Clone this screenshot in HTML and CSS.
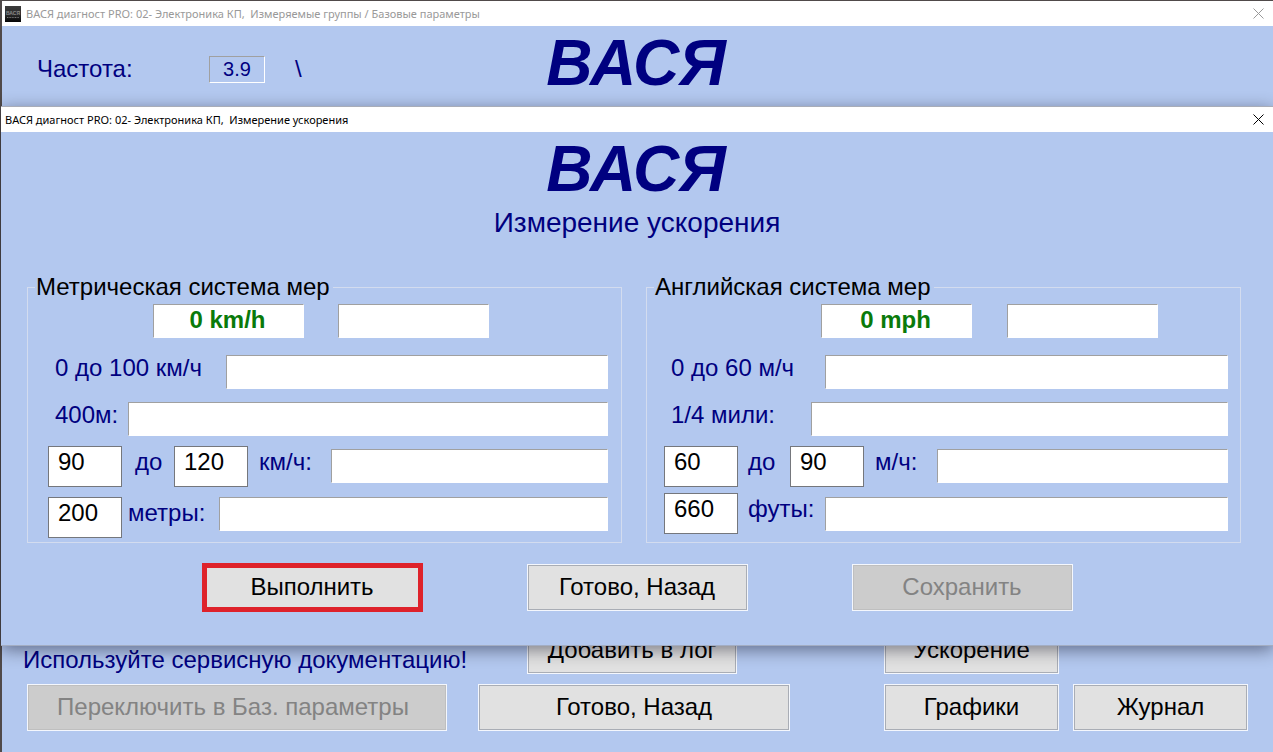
FILE: index.html
```html
<!DOCTYPE html>
<html lang="ru">
<head>
<meta charset="utf-8">
<title>ВАСЯ диагност PRO</title>
<link rel="stylesheet" href="styles.css">
</head>
<body>
<main class="window">
  <header class="titlebar titlebar-inactive">
    <svg class="app-icon" viewBox="0 0 16 16" aria-hidden="true">
      <defs><linearGradient id="g" x1="0" y1="0" x2="0" y2="1"><stop offset="0" stop-color="#3c3c3c"/><stop offset="0.55" stop-color="#2a2a2a"/><stop offset="1" stop-color="#050505"/></linearGradient></defs>
      <rect width="16" height="16" fill="url(#g)"/>
      <text class="app-icon-text" x="8" y="9" text-anchor="middle">ВАСЯ</text>
      <path d="M2 11.500h12" stroke="#777" stroke-width="1" stroke-dasharray="1 .6"/>
    </svg>
    <span class="titlebar-text">ВАСЯ диагност PRO: 02- Электроника КП,  Измеряемые группы / Базовые параметры</span>
    <button class="close" aria-label="Закрыть окно"><svg viewBox="0 0 11 11"><path d="M.5.5l10 10M10.500.5l-10 10"/></svg></button>
  </header>

  <section class="rate-bar">
    <div class="rate">
      <label class="rate-label" for="rate">Частота:</label>
      <input class="rate-value" id="rate" value="3.9" readonly>
      <span>\</span>
    </div>
    <div class="logo">ВАСЯ</div>
  </section>

  <footer class="window-actions">
    <p class="hint">Используйте сервисную документацию!</p>
    <button class="btn btn-log">Добавить в лог</button>
    <button class="btn btn-accel">Ускорение</button>
    <button class="btn btn-basic" disabled>Переключить в Баз. параметры</button>
    <button class="btn btn-back">Готово, Назад</button>
    <button class="btn btn-graph">Графики</button>
    <button class="btn btn-journal">Журнал</button>
  </footer>

  <section class="dialog" role="dialog" aria-labelledby="dialog-title">
    <header class="titlebar">
      <span class="titlebar-text" id="dialog-title">ВАСЯ диагност PRO: 02- Электроника КП,  Измерение ускорения</span>
      <button class="close" aria-label="Закрыть"><svg viewBox="0 0 11 11"><path d="M.5.5l10 10M10.500.5l-10 10"/></svg></button>
    </header>
    <div class="logo">ВАСЯ</div>
    <h1 class="subtitle">Измерение ускорения</h1>

    <form class="groups">
      <fieldset class="group metric">
        <legend>Метрическая система мер</legend>
        <div class="row row-live">
          <input class="readout live" value="0 km/h" aria-label="Скорость, km/h" readonly>
          <input class="readout live" aria-label="Время" readonly>
        </div>
        <div class="row row-sprint">
          <label class="label-sprint" for="m-sprint">0 до 100 км/ч</label>
          <input class="readout" id="m-sprint" readonly>
        </div>
        <div class="row row-distance">
          <label class="label-distance" for="m-distance">400м:</label>
          <input class="readout" id="m-distance" readonly>
        </div>
        <div class="row row-range">
          <input class="entry" value="90" aria-label="От, км/ч">
          <label class="label-to" for="m-to">до</label>
          <input class="entry" id="m-to" value="120">
          <label class="label-unit" for="m-range">км/ч:</label>
          <input class="readout" id="m-range" readonly>
        </div>
        <div class="row row-length">
          <input class="entry" value="200" aria-label="Дистанция, метры">
          <label class="label-length" for="m-length">метры:</label>
          <input class="readout" id="m-length" readonly>
        </div>
      </fieldset>

      <fieldset class="group imperial">
        <legend>Английская система мер</legend>
        <div class="row row-live">
          <input class="readout live" value="0 mph" aria-label="Скорость, mph" readonly>
          <input class="readout live" aria-label="Время" readonly>
        </div>
        <div class="row row-sprint">
          <label class="label-sprint" for="i-sprint">0 до 60 м/ч</label>
          <input class="readout" id="i-sprint" readonly>
        </div>
        <div class="row row-distance">
          <label class="label-distance" for="i-distance">1/4 мили:</label>
          <input class="readout" id="i-distance" readonly>
        </div>
        <div class="row row-range">
          <input class="entry" value="60" aria-label="От, м/ч">
          <label class="label-to" for="i-to">до</label>
          <input class="entry" id="i-to" value="90">
          <label class="label-unit" for="i-range">м/ч:</label>
          <input class="readout" id="i-range" readonly>
        </div>
        <div class="row row-length">
          <input class="entry" value="660" aria-label="Дистанция, футы">
          <label class="label-length" for="i-length">футы:</label>
          <input class="readout" id="i-length" readonly>
        </div>
      </fieldset>
    </form>

    <div class="dialog-actions">
      <button class="btn btn-run">Выполнить</button>
      <button class="btn">Готово, Назад</button>
      <button class="btn" disabled>Сохранить</button>
    </div>
  </section>
</main>
</body>
</html>
```
FILE: styles.css
```css
* {
  box-sizing: border-box;
}

body {
  margin: 0;
  padding: 1px 0 0 2px;
  background: #504a4a;
  color: #000080;
  font: 24px/28px "Liberation Sans", Arial, sans-serif;
}

input,
button {
  margin: 0;
  border-radius: 0;
  font: inherit;
}

.window {
  position: relative;
  display: flex;
  flex-direction: column;
  min-height: calc(100vh - 1px);
  background: #b3c8ef;
}

.titlebar {
  display: flex;
  align-items: center;
  gap: 5px;
  height: 25px;
  padding: 0 9px 0 4px;
  background: #fff;
  color: #000;
  font: 11px/16px "Noto Sans", "Open Sans", sans-serif;
}

.titlebar-inactive {
  padding-left: 3px;
  color: #999;
}

.titlebar-text {
  flex: 1;
  overflow: hidden;
  white-space: pre;
}

.app-icon {
  width: 16px;
  height: 16px;
}

.app-icon-text {
  fill: #8a8a8a;
  font: bold 5px "Liberation Sans", sans-serif;
}

.close {
  display: flex;
  padding: 0;
  border: 0;
  background: none;
  color: inherit;
}

.close svg {
  width: 11px;
  height: 11px;
  fill: none;
  stroke: currentColor;
}

.logo {
  font-size: 64px;
  font-style: italic;
  font-weight: bold;
  line-height: 72px;
  text-align: center;
}

.rate-bar {
  display: grid;
  grid-template-columns: 1fr auto 1fr;
  padding: 1px 3px 0 0;
}

.rate {
  display: flex;
  align-items: center;
  padding: 12px 0 0 35px;
}

.rate-label {
  width: 172px;
}

.rate-value {
  width: 56px;
  height: 27px;
  margin-right: 30px;
  padding: 0;
  border: 1px solid;
  border-color: #a0a0a0 #fff #fff #a0a0a0;
  background: none;
  color: #000080;
  font-size: 20px;
  text-align: center;
}

.window-actions {
  display: grid;
  grid-template-columns: 420fr 31px 312fr 94px 175fr 14px 175fr;
  row-gap: 10px;
  margin-top: auto;
  padding: 0 25px 21px;
}

.btn {
  height: 47px;
  padding: 0 0 2px;
  border: 1px solid #f4f7fd;
  outline: 1px solid #a9adb5;
  outline-offset: -2px;
  background: #e1e1e1;
  color: #000;
}

.btn:disabled {
  outline-color: #bfbfbf;
  background: #ccc;
  color: #838383;
}

.hint {
  grid-column: 1 / 3;
  grid-row: 1;
  align-self: end;
  margin: 0 0 0 -4px;
  white-space: nowrap;
}

.btn-log {
  grid-column: 3;
  grid-row: 1;
  justify-self: center;
  width: 210px;
  margin-right: 4px;
}

.btn-accel {
  grid-column: 5;
  grid-row: 1;
}

.btn-basic {
  grid-column: 1;
  padding-right: 8px;
}

.btn-back {
  grid-column: 3;
}

.btn-graph {
  grid-column: 5;
}

.btn-journal {
  grid-column: 7;
}

.dialog {
  position: absolute;
  top: 105px;
  right: 0;
  left: -1px;
  padding-bottom: 33px;
  border-top: 1px solid #a9adb8;
  border-bottom: 1px solid #a3adc2;
  background: #b3c8ef;
  box-shadow: 0 4px 16px rgba(0, 0, 20, 0.45);
}

.dialog > .logo {
  padding: 1px 2px 0 0;
}

.subtitle {
  margin: 2px 0 34px;
  font-size: 28px;
  font-weight: normal;
  line-height: 32px;
  text-align: center;
}

.groups {
  display: grid;
  grid-template-columns: 1fr 1fr;
  gap: 24px;
  padding: 0 32px 0 26px;
}

.group {
  min-width: 0;
  margin: 0;
  padding: 3px 13px 4px 20px;
  border: 1px solid #d3dcef;
}

.imperial {
  padding: 3px 12px 8px 17px;
}

legend {
  margin-left: -13px;
  padding: 0 3px 0 1px;
  color: #000;
}

.imperial legend {
  margin-left: -10px;
}

.row {
  display: flex;
  align-items: flex-start;
}

.readout {
  flex: 1;
  min-width: 0;
  height: 34px;
  padding: 0;
  border: 1px solid;
  border-color: #a0a0a0 #fff #fff #a0a0a0;
  background: #fff;
}

.live {
  flex: 0 1 151px;
  padding: 0 2px 2px 0;
  color: #0a7a0a;
  font-weight: bold;
  text-align: center;
}

.entry {
  flex: none;
  width: 74px;
  height: 41px;
  padding: 1px 4px 10px 9px;
  border: 1px solid #75777c;
  background: #fff;
  color: #000;
}

label {
  flex: none;
  white-space: nowrap;
}

.row-live {
  gap: 34px;
  padding-left: 105px;
}

.row-sprint {
  margin-top: 16px;
  padding-left: 7px;
}

.row-distance {
  margin-top: 12px;
  padding-left: 7px;
}

.row-sprint .readout,
.row-distance .readout {
  margin-top: 1px;
}

.row-range,
.row-length {
  margin-top: 10px;
}

.row-range label,
.row-length label {
  padding-top: 2px;
}

.row-range .readout {
  margin-top: 3px;
}

.label-sprint {
  width: 171px;
}

.label-distance {
  width: 73px;
}

.label-to {
  width: 52px;
  padding-left: 13px;
}

.label-unit {
  width: 83px;
  padding-left: 11px;
}

.label-length {
  width: 97px;
  padding-left: 6px;
}

.imperial .row-live {
  gap: 35px;
  padding-left: 157px;
}

.imperial .label-sprint {
  width: 154px;
}

.imperial .label-distance {
  width: 140px;
}

.imperial .label-to,
.imperial .label-length {
  padding-left: 10px;
}

.imperial .label-unit {
  width: 73px;
}

.imperial .label-length {
  width: 87px;
}

.imperial .row-length {
  margin-top: 6px;
}

.imperial .row-length .readout {
  margin-top: 4px;
}

.dialog-actions {
  display: flex;
  justify-content: center;
  align-items: center;
  gap: 104px;
  margin-top: 20px;
}

.dialog-actions .btn {
  width: 221px;
}

.dialog-actions .btn-run {
  height: 49px;
  border: 5px solid #de222b;
  outline: none;
}
```
